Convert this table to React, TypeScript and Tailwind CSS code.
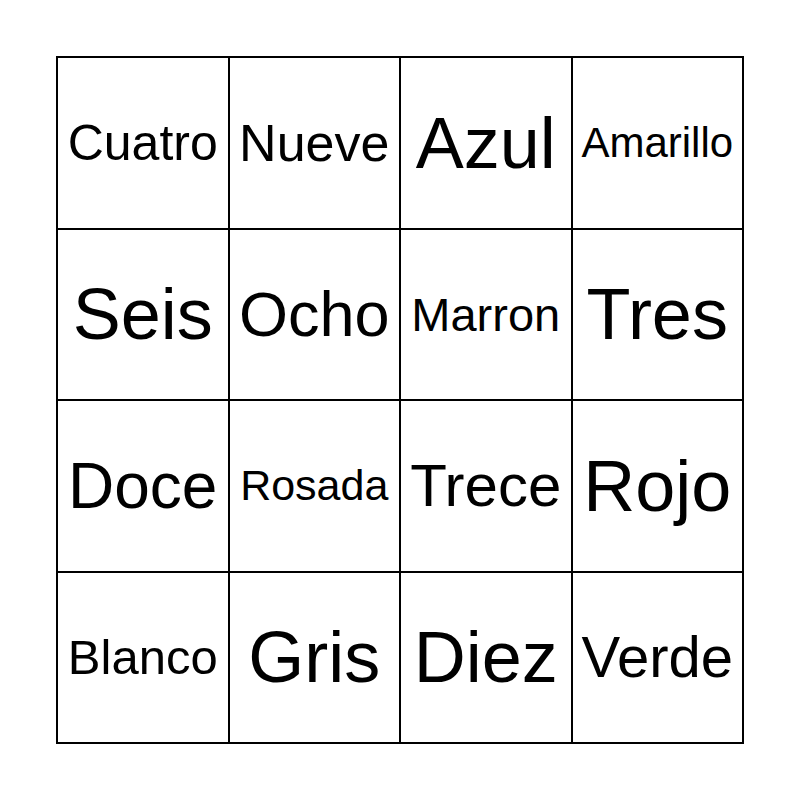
const cells: { word: string; size: string }[] = [
  { word: 'Cuatro', size: 'text-[50px]' },
  { word: 'Nueve', size: 'text-[52px]' },
  { word: 'Azul', size: 'text-[72px]' },
  { word: 'Amarillo', size: 'text-[42px]' },
  { word: 'Seis', size: 'text-[72px]' },
  { word: 'Ocho', size: 'text-[63px]' },
  { word: 'Marron', size: 'text-[47px]' },
  { word: 'Tres', size: 'text-[72px]' },
  { word: 'Doce', size: 'text-[64px]' },
  { word: 'Rosada', size: 'text-[43px]' },
  { word: 'Trece', size: 'text-[60px]' },
  { word: 'Rojo', size: 'text-[72px]' },
  { word: 'Blanco', size: 'text-[49px]' },
  { word: 'Gris', size: 'text-[72px]' },
  { word: 'Diez', size: 'text-[72px]' },
  { word: 'Verde', size: 'text-[58px]' },
];

export default function App() {
  return (
    <div className="flex h-[800px] w-[800px] items-center justify-center bg-white font-['Liberation_Sans',Arial,sans-serif] text-black">
      <div className="grid h-[688px] w-[688px] grid-cols-4 grid-rows-4 gap-[2px] bg-black p-[2px]">
        {cells.map((cell) => (
          <div key={cell.word} className="flex items-center justify-center bg-white">
            <span className={`${cell.size} leading-none whitespace-nowrap`}>{cell.word}</span>
          </div>
        ))}
      </div>
    </div>
  );
}
